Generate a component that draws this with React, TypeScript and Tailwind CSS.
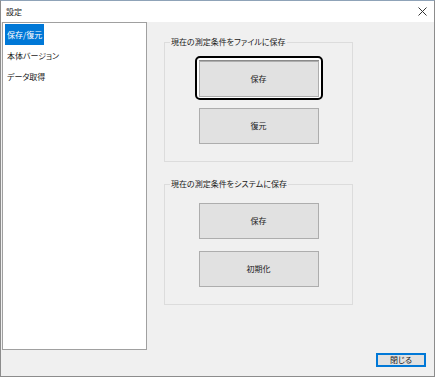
function Btn({ label }: { label: string }) {
  return (
    <div className="w-[120px] h-[36px] bg-[#e1e1e1] border border-[#adadad] flex items-center justify-center">
      {label}
    </div>
  );
}

function Group({ title, children, className }: { title: string; children: React.ReactNode; className: string }) {
  return (
    <div className={"relative w-[189px] border border-[#dcdcdc] flex flex-col items-center " + className}>
      <span className="absolute -top-[7px] left-[5px] bg-[#f0f0f0] px-[1px] leading-[12px]">{title}</span>
      {children}
    </div>
  );
}

export default function App() {
  return (
    <div className="w-[435px] h-[377px] border border-[#8c8c8c] border-t-[#8fa3b8] bg-[#f0f0f0] flex flex-col text-[8px] text-[#1a1a1a] font-['Noto_Sans_CJK_JP',sans-serif] [font-feature-settings:'palt']">
      <div className="h-[21px] bg-white flex items-center justify-between pl-[5px] pr-[6px]">
        <span>設定</span>
        <svg width="9" height="9" viewBox="0 0 9 9" className="mr-[1px]">
          <path d="M0.5 0.5 L8.5 8.5 M8.5 0.5 L0.5 8.5" stroke="#333" strokeWidth="1" />
        </svg>
      </div>

      <div className="flex-1 flex flex-col">
        <div className="flex h-[328px]">
          <div className="ml-[1px] w-[145px] h-full bg-white border border-[#a0a0a0] pl-[2px] pt-[1px] flex flex-col items-start">
            <div className="h-[21px] px-[2px] bg-[#0078d7] text-white flex items-center">保存/復元</div>
            <div className="h-[21px] px-[2px] flex items-center">本体バージョン</div>
            <div className="h-[21px] px-[2px] flex items-center">データ取得</div>
          </div>

          <div className="ml-[17px] pt-[20px] flex flex-col">
            <Group title="現在の測定条件をファイルに保存" className="h-[120px] pt-[13px]">
              <div className="w-[128px] h-[44px] rounded-[5px] border-2 border-black bg-white p-[2px]">
                <div className="border-t border-t-[#8a8a8a]">
                  <Btn label="保存" />
                </div>
              </div>
              <div className="mt-[8px]">
                <Btn label="復元" />
              </div>
            </Group>
            <Group title="現在の測定条件をシステムに保存" className="h-[121px] mt-[22px] pt-[18px]">
              <Btn label="保存" />
              <div className="mt-[12px]">
                <Btn label="初期化" />
              </div>
            </Group>
          </div>
        </div>

        <div className="flex justify-end pr-[8px] pt-[3px]">
          <div className="w-[50px] h-[14px] bg-[#e1e1e1] border border-[#0078d7] shadow-[inset_0_0_0_1px_#0078d7] flex items-center justify-center">
            閉じる
          </div>
        </div>
      </div>
    </div>
  );
}
